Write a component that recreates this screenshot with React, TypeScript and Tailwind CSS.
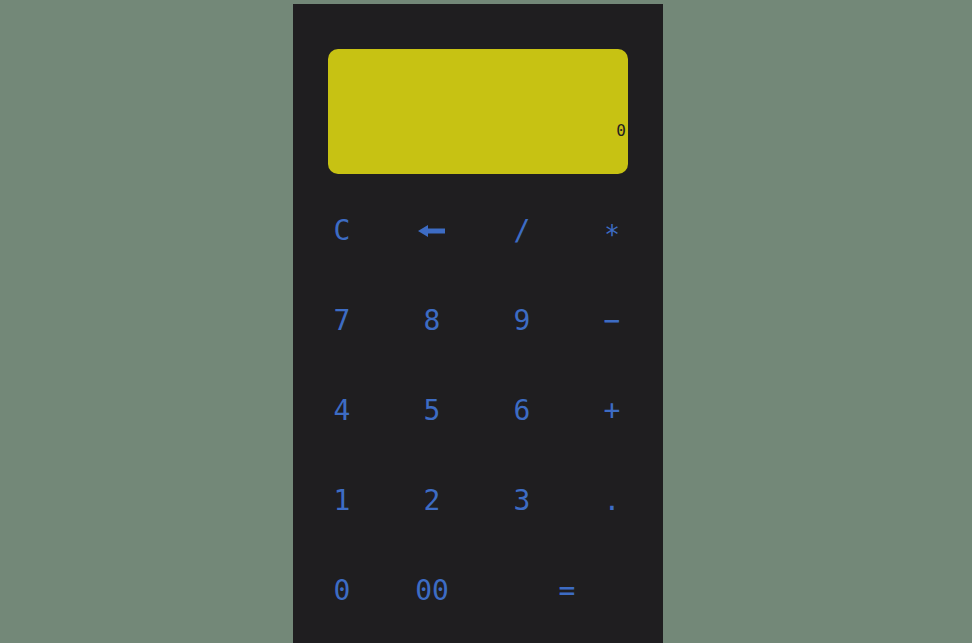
const keys: { label: string; wide?: boolean }[] = [
  { label: "C" },
  { label: "back" },
  { label: "/" },
  { label: "*" },
  { label: "7" },
  { label: "8" },
  { label: "9" },
  { label: "−" },
  { label: "4" },
  { label: "5" },
  { label: "6" },
  { label: "+" },
  { label: "1" },
  { label: "2" },
  { label: "3" },
  { label: "." },
  { label: "0" },
  { label: "00" },
  { label: "=", wide: true },
];

function BackArrow() {
  return (
    <svg width="28" height="12" viewBox="0 0 28 12" aria-label="backspace">
      <polygon points="0,6 10,0 10,3.5 27,3.5 27,8.5 10,8.5 10,12" fill="#3d6cc4" />
    </svg>
  );
}

export default function App() {
  return (
    <div className="min-h-[643px] w-full bg-[#738878] flex justify-center pr-[16px] font-['DejaVu_Sans_Mono',monospace]">
      <div className="mt-[4px] w-[370px] bg-[#1f1e20] pt-[45px] pb-[20px]">
        <div className="ml-[35px] w-[300px] h-[125px] rounded-[10px] bg-[#c7c213] flex items-end justify-end pr-[2px] pb-[31px]">
          <span className="text-[16px] leading-[24px] text-[#1f1e20]">0</span>
        </div>
        <div className="ml-[4px] mt-[12px] w-[360px] grid grid-cols-4">
          {keys.map((k) => (
            <button
              key={k.label}
              className={
                "h-[90px] flex items-center justify-center text-[28px] text-[#3d6cc4] " +
                (k.wide ? "col-span-2" : "")
              }
            >
              {k.label === "back" ? (
                <BackArrow />
              ) : k.label === "*" ? (
                <span className="translate-y-[4px] text-[26px]">*</span>
              ) : (
                k.label
              )}
            </button>
          ))}
        </div>
      </div>
    </div>
  );
}
